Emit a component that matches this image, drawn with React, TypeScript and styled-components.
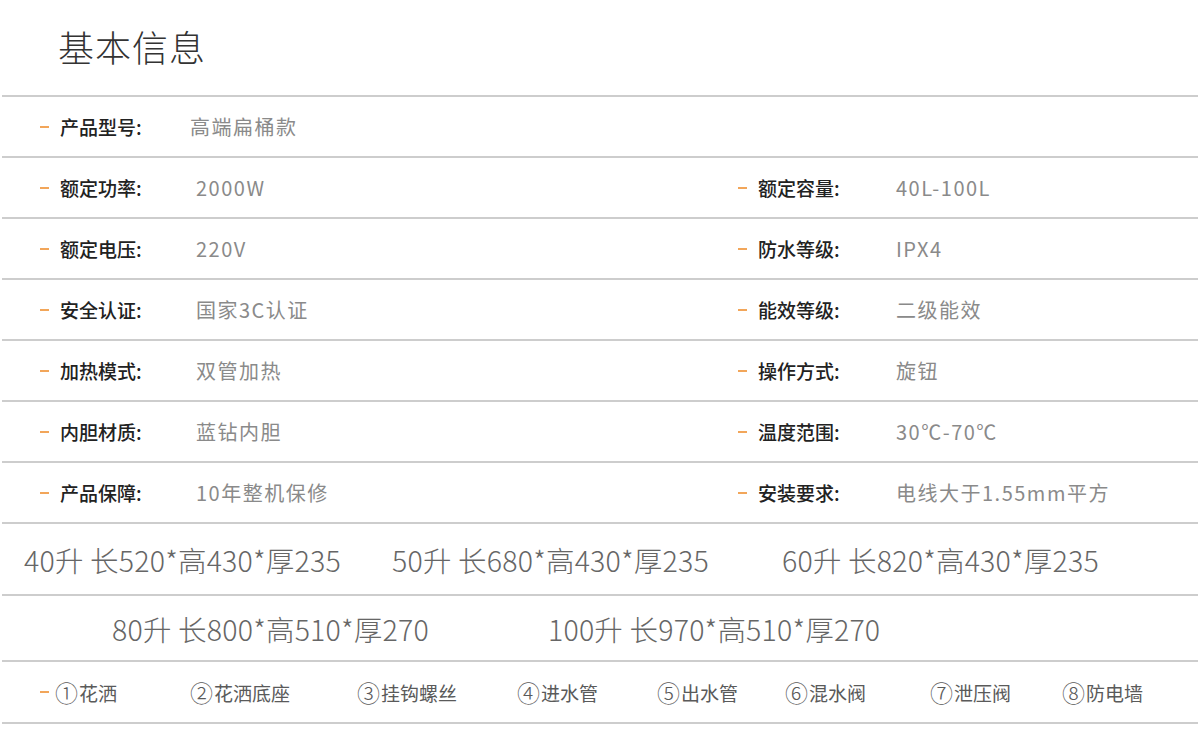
import React from "react";
import styled, { createGlobalStyle } from "styled-components";

const Global = createGlobalStyle`
  html, body { margin: 0; padding: 0; background: #ffffff; }
  body { font-family: "Noto Sans CJK SC", "Noto Sans", sans-serif; }
`;

const Page = styled.div`
  width: 1200px;
  height: 743px;
  background: #fff;
  overflow: hidden;
`;

const Header = styled.div`
  height: 95px;
  display: flex;
  align-items: center;
  padding-left: 56px;
  border-bottom: 2px solid #cdcdcd;
  margin: 0 2px 0 2px;
`;

const Title = styled.h1`
  margin: 0;
  font-size: 36px;
  font-weight: 300;
  color: #333;
  letter-spacing: 1px;
  transform: translateY(-2px);
`;

const Row = styled.div`
  height: 59px;
  display: grid;
  grid-template-columns: 698px 1fr;
  align-items: center;
  border-bottom: 2px solid #cdcdcd;
  margin: 0 2px;
  padding-left: 38px;
`;

const Cell = styled.div`
  display: flex;
  align-items: center;
`;

const Dash = styled.span<{ $gap?: number }>`
  width: 9px;
  height: 2px;
  background: #f2a65a;
  margin-right: ${(p) => p.$gap ?? 11}px;
  flex: none;
`;

const Label = styled.span<{ $w?: number }>`
  width: ${(p) => p.$w ?? 135}px;
  flex: none;
  font-size: 19px;
  font-weight: 500;
  color: #222;
  white-space: nowrap;
`;

const Value = styled.span`
  font-size: 20px;
  color: #8a8a8a;
  white-space: nowrap;
  letter-spacing: 1.5px;
`;

const SizeRow = styled.div<{ $h: number; $pad: number; $cols: string }>`
  height: ${(p) => p.$h}px;
  display: grid;
  grid-template-columns: ${(p) => p.$cols};
  align-items: center;
  padding-left: ${(p) => p.$pad}px;
  border-bottom: 2px solid #cdcdcd;
  margin: 0 2px;
`;

const SizeText = styled.span`
  font-size: 28.5px;
  font-weight: 300;
  color: #666;
  white-space: nowrap;
  letter-spacing: 0.2px;
`;

const PartsRow = styled.div<{ $cols: string }>`
  height: 60px;
  display: grid;
  grid-template-columns: ${(p) => p.$cols};
  align-items: center;
  padding-left: 38px;
  border-bottom: 2px solid #cdcdcd;
  margin: 0 2px;
`;

const Part = styled.span`
  font-size: 19px;
  font-weight: 400;
  color: #5a5a5a;
  white-space: nowrap;
  display: flex;
  align-items: center;
`;

const Num = styled.span`
  font-size: 23px;
  font-weight: 300;
  line-height: 1;
  margin-right: 1px;
`;

type Spec = { label: string; value: string };

const rows: [Spec, Spec | null][] = [
  [{ label: "产品型号:", value: "高端扁桶款" }, null],
  [{ label: "额定功率:", value: "2000W" }, { label: "额定容量:", value: "40L-100L" }],
  [{ label: "额定电压:", value: "220V" }, { label: "防水等级:", value: "IPX4" }],
  [{ label: "安全认证:", value: "国家3C认证" }, { label: "能效等级:", value: "二级能效" }],
  [{ label: "加热模式:", value: "双管加热" }, { label: "操作方式:", value: "旋钮" }],
  [{ label: "内胆材质:", value: "蓝钻内胆" }, { label: "温度范围:", value: "30℃-70℃" }],
  [{ label: "产品保障:", value: "10年整机保修" }, { label: "安装要求:", value: "电线大于1.55mm平方" }],
];

const parts: [string, string][] = [
  ["①", "花洒"],
  ["②", "花洒底座"],
  ["③", "挂钩螺丝"],
  ["④", "进水管"],
  ["⑤", "出水管"],
  ["⑥", "混水阀"],
  ["⑦", "泄压阀"],
  ["⑧", "防电墙"],
];

export default function App() {
  return (
    <Page>
      <Global />
      <Header>
        <Title>基本信息</Title>
      </Header>
      {rows.map(([l, r], i) => (
        <Row key={i}>
          <Cell>
            <Dash />
            <Label $w={i === 0 ? 130 : 136}>{l.label}</Label>
            <Value>{l.value}</Value>
          </Cell>
          {r ? (
            <Cell>
              <Dash />
              <Label $w={138}>{r.label}</Label>
              <Value>{r.value}</Value>
            </Cell>
          ) : (
            <Cell />
          )}
        </Row>
      ))}
      <SizeRow $h={70} $pad={22} $cols="368px 390px 1fr">
        <SizeText>40升 长520*高430*厚235</SizeText>
        <SizeText>50升 长680*高430*厚235</SizeText>
        <SizeText>60升 长820*高430*厚235</SizeText>
      </SizeRow>
      <SizeRow $h={64} $pad={110} $cols="436px 1fr">
        <SizeText>80升 长800*高510*厚270</SizeText>
        <SizeText>100升 长970*高510*厚270</SizeText>
      </SizeRow>
      <PartsRow $cols="150px 167px 160px 140px 128px 145px 132px 1fr">
        {parts.map(([n, t], i) => (
          <Part key={i}>
            {i === 0 && <Dash $gap={6} />}
            <Num>{n}</Num>
            {t}
          </Part>
        ))}
      </PartsRow>
    </Page>
  );
}
